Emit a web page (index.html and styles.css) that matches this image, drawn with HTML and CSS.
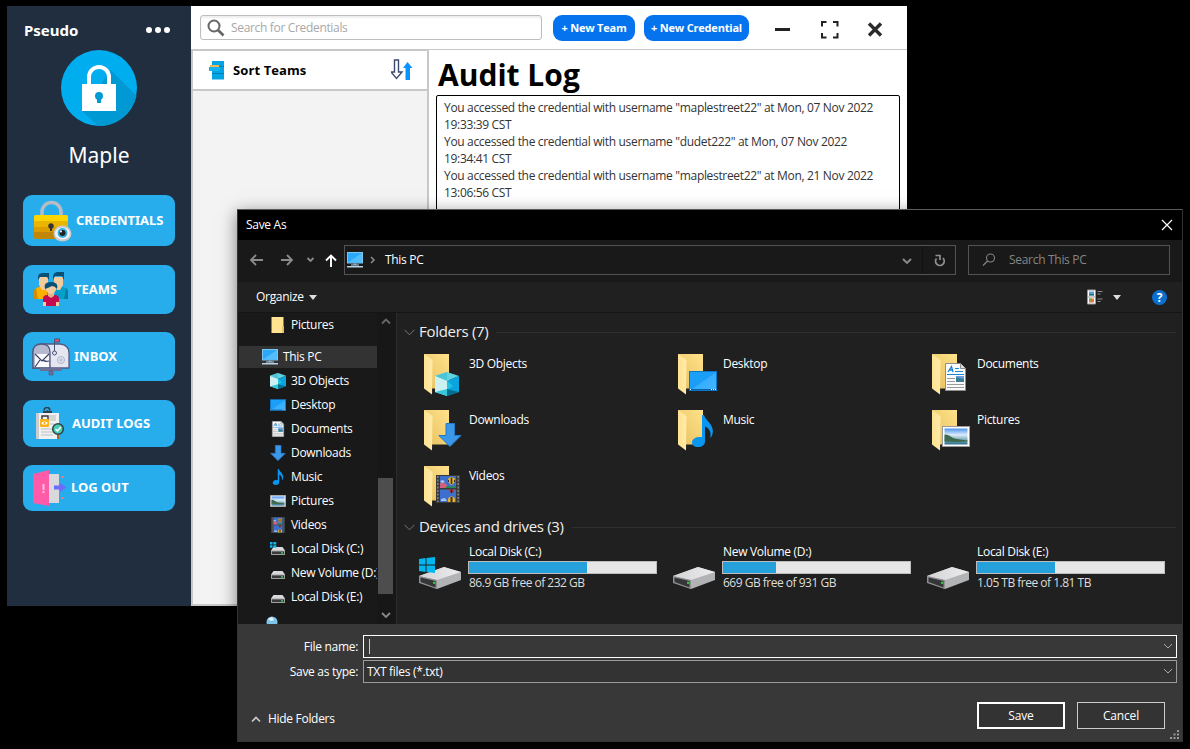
FILE: index.html
```html
<!DOCTYPE html>
<html lang="en">
<head>
<meta charset="utf-8">
<title>Pseudo</title>
<link rel="stylesheet" href="styles.css">
</head>
<body>
<svg class="defs" width="0" height="0">
  <defs>
    <linearGradient id="gBack" x1="0" x2="1" y1="1" y2="0"><stop offset="0" stop-color="#e7bf5e"/><stop offset="1" stop-color="#ffe28a"/></linearGradient>
    <linearGradient id="gFlap" x1="0" x2="1"><stop offset="0" stop-color="#ffe291"/><stop offset="1" stop-color="#ffeaa9"/></linearGradient>
    <linearGradient id="gScreen" x1="0" x2="1" y1="0" y2="1"><stop offset="0" stop-color="#1ba0f8"/><stop offset=".5" stop-color="#1b9df8"/><stop offset=".52" stop-color="#36adff"/><stop offset="1" stop-color="#45b6ff"/></linearGradient>
    <linearGradient id="gSky" x1="0" x2="0" y1="0" y2="1"><stop offset="0" stop-color="#4d92ee"/><stop offset=".4" stop-color="#dcecfb"/><stop offset=".6" stop-color="#9dc0cc"/><stop offset="1" stop-color="#2a6f8c"/></linearGradient>
    <linearGradient id="gDrive" x1="0" x2="1"><stop offset="0" stop-color="#d4d4d6"/><stop offset="1" stop-color="#ececee"/></linearGradient>
    <symbol id="folder" viewBox="0 0 48 48"><path d="M9 4h25v34.500H16z" fill="url(#gBack)"/><path d="M9 4l8.500 6-.5 34.500-8-6z" fill="url(#gFlap)"/></symbol>
    <symbol id="cube" viewBox="0 0 24 24"><path d="M12 0l12 4-12 5L0 4z" fill="#5fd3e2"/><path d="M12 0v9L0 4z" fill="#4ac6d8"/><path d="M0 4l12 5v15L0 20z" fill="#cdf1f3"/><path d="M24 4L12 9v15l12-4z" fill="#0aa5de"/><path d="M12 9l6 5-6 4z" fill="#22c3df"/><path d="M12 17l12 3-12 4z" fill="#046f8f"/><path d="M12 17L0 20l12 4z" fill="#35c7da"/></symbol>
    <symbol id="arrow" viewBox="0 0 24 24"><path d="M8 .5h8.500v12H23L12 23.500 .8 12.500H8z" fill="#3b97e8" stroke="#2478c8"/></symbol>
    <symbol id="desk" viewBox="0 0 28 20"><rect x=".5" y=".5" width="27" height="19" fill="url(#gScreen)" stroke="#0c76c9"/><path d="M1 18.500h26" stroke="#0861ab"/><path d="M1 18.500h1m20 0h1m1 0h1m1 0h1" stroke="#fff"/></symbol>
    <symbol id="doc" viewBox="0 0 21 28"><path d="M.5.500h15l5 5v22H.5z" fill="#fafafa" stroke="#8d8d8d"/><path d="M15.500.500v5h5" fill="#ddd" stroke="#8d8d8d"/><path d="M3 9l3.500-5.500L8 9M4.500 7H8" fill="none" stroke="#1a7fd0" stroke-width="1.300"/><path d="M10 5.500h4M10 8.500h8M2 11.500h17" stroke="#1a87d8"/><path d="M2 15.500h8M2 18.500h8M2 21.500h17M2 24.500h17" stroke="#9a9a9a"/><path d="M11 13h8v6h-8z" fill="#377d95"/><path d="M11 13h8v3l-8-2z" fill="#6b9ce3"/></symbol>
    <symbol id="note" viewBox="0 0 21 32"><path d="M10 0h2c1 4 5 6 7.500 11 2.200 4.500 1.500 8-.5 11.500h-.8C19.500 17 17 13 13 11.500V26.500C13 30 10 32 6 32S0 30 0 27.500C0 24.500 3 22 7 22h3z" fill="#0a96f0"/></symbol>
    <symbol id="pic" viewBox="0 0 28 21"><rect x=".5" y=".5" width="27" height="20" fill="#fff" stroke="#9b9b9b"/><path d="M2.500 2.500h23v16h-23z" fill="url(#gSky)"/><path d="M2.500 8.500c4-.5 7 3 10 4s8 1 13 2v.8c-8 1.200-15 .7-23 .2z" fill="#3c6b4e"/></symbol>
    <symbol id="film" viewBox="0 0 24 28"><path d="M0 0h24v28H0z" fill="#3a3a3a"/><path d="M4 1h16v12H4zM4 14.500h16V27H4z" fill="#3d70ce"/><path d="M4 8l3-1 4 3v3H4z" fill="#d0607e"/><path d="M4 6l3-1 2 2-3 1z" fill="#a9c5ee"/><path d="M12 5.500a3.500 3.500 0 017 0c0 2-2 3.500-3.500 4.500C14 9 12 7.500 12 5.500zM12 25a3.500 3.500 0 017 0v2h-7z" fill="#e3b52d"/><path d="M14.700 2.500h1.600V9h-1.600zM14.500 22h2v5h-2zM12 5h1v2h-1zM18 5h1v2h-1z" fill="#472b25"/><path d="M12 14.500h7l-3.500 4z" fill="#c9352e"/><path d="M14.700 14.500h1.600V18h-1.600z" fill="#222"/><path d="M10 11.500h10V13H10z" fill="#258c3c"/><path d="M5 24l4-1 2 3H5z" fill="#a9c5ee"/><path d="M1.800 1v26M22.200 1v26" stroke="#8c8c8c" stroke-width="1.400" stroke-dasharray="2 1.500"/></symbol>
    <symbol id="drive" viewBox="0 0 42 22"><path d="M0 9L25 0l17 5v8L18 22 0 15z" fill="#b2b3b5"/><path d="M0 9L25 0l17 5-24 8z" fill="url(#gDrive)"/><path d="M0 9l18 4v9L0 16z" fill="#8f9092"/><path d="M1.500 10.500L16.500 14v6.500L1.500 15z" fill="#343638"/><path d="M14 14.800h2.200v2H14z" fill="#32d14a"/></symbol>
    <symbol id="sdrive" viewBox="0 0 16 16"><path d="M3.500 6h9L15 9.500v4H1v-4z" fill="#d9d9db"/><rect x="1" y="9.500" width="14" height="4.500" rx="1" fill="#9fa0a2"/><rect x="2" y="10.500" width="12" height="2.500" fill="#37393b"/><path d="M11 11.300h2v1.200h-2z" fill="#37e05a"/></symbol>
    <symbol id="pc" viewBox="0 0 16 16"><rect x=".5" y=".5" width="15" height="10.500" fill="#2ba8fa" stroke="#7cc6ee"/><path d="M1 10.500L15 1v9.500z" fill="#52bdff"/><path d="M6.500 11h3v2h-3z" fill="#6e8a9a"/><path d="M4 12.500h8v1H4zM0 14h16v1.500H0z" fill="#b5d3e4"/></symbol>
    <symbol id="win" viewBox="0 0 16 16"><path d="M0 2l6.500-1v6.500H0zM7.500 .9L16 0v7.500H7.500zM0 8.500h6.500V15L0 14zM7.500 8.500H16V16l-8.500-.9z" fill="#00b7f1"/></symbol>
  </defs>
</svg>
<div class="desktop">

<section class="app">
  <aside class="side">
    <div class="side-top"><b>Pseudo</b><span class="dots"><i></i><i></i><i></i></span></div>
    <svg class="avatar" width="76" height="76" viewBox="0 0 76 76"><circle cx="38" cy="38" r="38" fill="#00adef"/><path d="M50 20L75.500 46A38 38 0 0137 76L21 61z" fill="#0099d3"/><path d="M28 35V27a10 10 0 0120 0v8" fill="none" stroke="#fff" stroke-width="4"/><path d="M21 34h34v27H21z" fill="#fff"/><circle cx="38" cy="46" r="4" fill="#0099d3"/><path d="M36 47h4v6h-4z" fill="#0099d3"/></svg>
    <div class="user">Maple</div>
    <nav class="menu">
      <a class="btn b1"><svg width="40" height="42" viewBox="0 0 40 42"><path d="M9 16v-4a9 9 0 0119 0v4" fill="none" stroke="#b4bcc4" stroke-width="3.500"/><rect x="1" y="15" width="34" height="24" rx="2" fill="#e9b500"/><path d="M1 17q0-2 2-2h30q2 0 2 2v4H1z" fill="#fcd503"/><path d="M1 27h34v5H1z" fill="#db9d00"/><path d="M1 32h34v5q0 2-2 2H3q-2 0-2-2z" fill="#bf8608"/><circle cx="18" cy="26" r="2.700" fill="#333"/><path d="M17 26h2v5h-2z" fill="#333"/><ellipse cx="29.500" cy="33.500" rx="9" ry="8" fill="#c8c9cb"/><ellipse cx="29.500" cy="33.500" rx="7.500" ry="6" fill="#f6f6f6"/><circle cx="29.500" cy="33" r="5" fill="#35b1e3"/><circle cx="29.500" cy="33" r="3" fill="#222"/><circle cx="28" cy="31.500" r="1" fill="#fff"/></svg><span>CREDENTIALS</span></a>
      <a class="btn b2"><svg width="36" height="36" viewBox="0 0 36 36"><path d="M1 27v-6q0-5 5-6h8v12z" fill="#fbb000"/><path d="M1 27v-6q0-4 2-5l2 11z" fill="#d08d00"/><path d="M35 27v-6q0-5-5-6h-8v12z" fill="#04a0c9"/><path d="M35 27v-6q0-4-2-5l-2 11z" fill="#067da5"/><path d="M6 5h9v8l-3 5h-3l-3-5zM21 5h9v8l-3 5h-3l-3-5z" fill="#f3cb9d"/><path d="M5 8V5q0-4 5-4h6v7l-2-3H7zM20 8V4q1-4 5-4h6v8l-2-4h-7z" fill="#085075"/><path d="M10 34v-7q0-4 4-4h8q4 0 4 4v7z" fill="#c60a50"/><path d="M10 34v-4h3v4zM23 34v-4h3v4z" fill="#f3cb9d"/><path d="M15 20h6v4l-3 2-3-2z" fill="#e4b382"/><path d="M13 13h10v5q-2 4-5 4t-5-4z" fill="#f3cb9d"/><path d="M12 17q-2-7 6-7t6 7q-2-3-5-3-4 2-7 3z" fill="#085075"/></svg><span>TEAMS</span></a>
      <a class="btn b3"><svg width="38" height="38" viewBox="0 0 38 38"><path d="M9 6h19q9 1 9 9v15H1V14q0-7 8-8z" fill="#e4e7f2" stroke="#535b82" stroke-width="1.300"/><path d="M1 14q0-8 8.500-8T18 14v16H1z" fill="#b4b9d0" stroke="#535b82" stroke-width="1.300"/><path d="M3 16h14v13H3z" fill="#fafafe"/><path d="M3 16l7 7 7-7M3 29l5-7m9 1q-4 1-6-1" fill="none" stroke="#39406a" stroke-width="1.200"/><path d="M22.500 14V1h5v3h-5" fill="#e8536a" stroke="#4b5278"/><circle cx="22.500" cy="15" r="2" fill="#e4e7f2" stroke="#4b5278"/><circle cx="29" cy="22" r="3.500" fill="none" stroke="#aeb3c9"/><circle cx="29" cy="22" r="1.200" fill="none" stroke="#aeb3c9"/><path d="M8 30h22v3H8z" fill="#6b7196"/><path d="M17 33h4v4h-4z" fill="#6b7196" stroke="#4b5278" stroke-width=".6"/></svg><span>INBOX</span></a>
      <a class="btn b4"><svg width="28" height="33" viewBox="0 0 28 33"><path d="M0 6h23v26H0z" fill="#f1f1f1"/><path d="M0 6h3v26H0z" fill="#c9cdd0"/><path d="M7 6V4h3a2 2 0 013 0h3v2z" fill="#333f48"/><path d="M8 3.500a3 3 0 016 0" fill="none" stroke="#333f48" stroke-width="1.500"/><path d="M13 8h7v6h-7z" fill="#d5d5d5"/><path d="M5 22h12M5 25h14M5 28h12M14 17h4" stroke="#b8bfc3"/><path d="M6 14v-5h6v5" fill="none" stroke="#333" stroke-width="1.400"/><rect x="4" y="12" width="9" height="8" rx="1" fill="#f9b319"/><ellipse cx="8.500" cy="16" rx="3" ry="1.600" fill="#fff"/><circle cx="8.500" cy="16" r="1" fill="#f39c12"/><path d="M22 27v5" stroke="#a96a1b" stroke-width="2"/><circle cx="22" cy="22" r="5.300" fill="#47cdb0" stroke="#32414b" stroke-width="1.500"/><path d="M19.500 22l2 2 3.300-4" fill="none" stroke="#fff" stroke-width="1.500"/></svg><span>AUDIT LOGS</span></a>
      <a class="btn b5"><svg width="34" height="36" viewBox="0 0 34 36"><path d="M14 4h12v29H14z" fill="#d9d9dc"/><path d="M0 4l16-4v36L0 33z" fill="#ff5ba8"/><path d="M9.500 14h2v6h-2zM9.500 21h2v2h-2z" fill="#ffc4e0"/><path d="M21 15.500h6V13l6.500 4.500L27 22v-2.500h-6z" fill="#6c6cfb"/><path d="M28.500 6h2v2h-2zM28.500 27h2v2h-2z" fill="#ef7f84"/></svg><span>LOG OUT</span></a>
    </nav>
  </aside>
  <div class="app-main">
    <header class="bar">
      <div class="search"><svg width="18" height="18" viewBox="0 0 18 18"><circle cx="7" cy="7" r="5.500" fill="none" stroke="#666" stroke-width="2"/><path d="M11 11l5.500 5.500" stroke="#666" stroke-width="2.600"/></svg><span>Search for Credentials</span></div>
      <button class="pill p1">+ New Team</button><button class="pill p2">+ New Credential</button>
      <svg class="winctl" width="110" height="20" viewBox="0 0 110 20"><path d="M0 10.500h15" stroke="#222" stroke-width="3"/><path d="M47 7.500V3h4.500M58 3h4.500v4.500M62.500 14v4.500H58M51.500 18.500H47V14" fill="none" stroke="#222" stroke-width="2"/><path d="M94 4.500l12 12m0-12l-12 12" stroke="#2b2b2b" stroke-width="3.400"/></svg>
    </header>
    <div class="cols">
      <div class="teams">
        <div class="sort"><svg width="15" height="19" viewBox="0 0 15 19"><path d="M3 0h12v18.500H3z" fill="#03a4e4"/><path d="M3 5.500h12M3 12.500h12" stroke="#0480b8"/><path d="M1 4h9v3H1z" fill="#f1b857"/><path d="M0 6h11v4H0z" fill="#16b3ee"/></svg><b>Sort Teams</b>
        <svg class="updown" width="22" height="22" viewBox="0 0 22 22"><path d="M3.500 1h4v12H11l-5.500 6.500L0 13h3.500z" fill="#fff" stroke="#3d4a70" stroke-width="1.400"/><path d="M14.500 21V9H12l4.500-6L21.500 9H19v12z" fill="#0893ff"/></svg></div>
      </div>
      <div class="audit">
        <h1>Audit Log</h1>
        <div class="log">You accessed the credential with username "maplestreet22" at Mon, 07 Nov 2022<br>19:33:39 CST<br>You accessed the credential with username "dudet222" at Mon, 07 Nov 2022<br>19:34:41 CST<br>You accessed the credential with username "maplestreet22" at Mon, 21 Nov 2022<br>13:06:56 CST</div>
      </div>
    </div>
  </div>
</section>

<section class="dialog">
  <header class="title"><span>Save As</span><svg width="12" height="12" viewBox="0 0 12 12"><path d="M1 1l10 10M11 1L1 11" stroke="#fff" stroke-width="1.200"/></svg></header>
  <div class="nav">
    <svg class="arrows" width="90" height="16" viewBox="0 0 90 16"><g fill="none" stroke="#8b8b8b" stroke-width="1.800"><path d="M14 8H2.500M7 3L2 8l5 5M32 8h11M38 3l5 5-5 5"/><path d="M58.500 6l3 3 3-3"/><path d="M82 15V4M77 8.500l5-5 5 5" stroke="#fff" stroke-width="1.900"/></g></svg>
    <div class="address"><svg width="16" height="16"><use href="#pc"/></svg><svg class="crumb" width="6" height="8" viewBox="0 0 6 8"><path d="M1 1l3 3-3 3" fill="none" stroke="#8b8b8b" stroke-width="1.500"/></svg><span>This PC</span>
      <svg class="adr-down" width="10" height="7" viewBox="0 0 10 7"><path d="M1 1l4 4 4-4" fill="none" stroke="#8b8b8b" stroke-width="1.900"/></svg>
      <i class="sep"></i><svg class="reload" width="12" height="13" viewBox="0 0 12 13"><path d="M9 4.200A4.300 4.300 0 112.500 4.500" fill="none" stroke="#8f8f8f" stroke-width="1.800"/><path d="M1.500 1.500h4.500v4.500" fill="none" stroke="#8f8f8f" stroke-width="1.700"/></svg></div>
    <div class="find"><svg width="14" height="14" viewBox="0 0 14 14"><circle cx="8.500" cy="5" r="4" fill="none" stroke="#858585" stroke-width="1.100"/><path d="M5.500 8L1 12.500" stroke="#858585" stroke-width="1.200"/></svg><span>Search This PC</span></div>
  </div>
  <div class="tools"><span>Organize</span><i class="tri"></i>
    <svg class="view" width="16" height="16" viewBox="0 0 16 16"><path d="M.5 1h8v14h-8z" fill="#fff" stroke="#999"/><path d="M2 2.500h5v4H2z" fill="#579fd9"/><path d="M2 5h5v1.500H2z" fill="#276c70"/><path d="M2 9.500h5v4H2z" fill="#db7b45"/><path d="M2 9.500h3v2H2z" fill="#66aa55"/><path d="M1 8h7" stroke="#999"/><path d="M10.500 2.500h5M10.500 5h3M10.500 10h5M10.500 12.500h3" stroke="#8b8b8b"/></svg><i class="tri"></i>
    <b class="help">?</b></div>
  <div class="body">
    <div class="tree">
      <div class="row first"><svg width="16" height="16" viewBox="0 0 16 16"><path d="M1.500 0h12v16h-12z" fill="#ffe391"/><path d="M12 9h2v7h-2z" fill="#e9c060"/></svg><span>Pictures</span></div>
      <div class="row sel"><svg width="16" height="16"><use href="#pc"/></svg><span>This PC</span></div>
      <div class="row"><svg width="16" height="16"><use href="#cube"/></svg><span>3D Objects</span></div>
      <div class="row"><svg width="16" height="16"><use href="#desk"/></svg><span>Desktop</span></div>
      <div class="row"><svg width="16" height="16"><use href="#doc"/></svg><span>Documents</span></div>
      <div class="row"><svg width="16" height="16"><use href="#arrow"/></svg><span>Downloads</span></div>
      <div class="row"><svg width="16" height="16"><use href="#note"/></svg><span>Music</span></div>
      <div class="row"><svg width="16" height="16"><use href="#pic"/></svg><span>Pictures</span></div>
      <div class="row"><svg width="16" height="16"><use href="#film"/></svg><span>Videos</span></div>
      <div class="row"><svg width="16" height="16" viewBox="0 0 16 16"><use href="#sdrive"/><path d="M0 1h2.500v2.500H0zM3.300 1h3v2.500h-3zM0 4.300h2.500v2.500H0zM3.300 4.300h3v2.500h-3z" fill="#10b5ef"/></svg><span>Local Disk (C:)</span></div>
      <div class="row"><svg width="16" height="16"><use href="#sdrive"/></svg><span>New Volume (D:)</span></div>
      <div class="row"><svg width="16" height="16"><use href="#sdrive"/></svg><span>Local Disk (E:)</span></div>
      <div class="row net"><svg width="16" height="16" viewBox="0 0 16 16"><circle cx="10" cy="6" r="5.500" fill="#7fc4ea"/><path d="M6 3l4-2 2 3-3 1z" fill="#e6f4fb"/></svg></div>
    </div>
    <div class="scroll"><svg width="10" height="7" viewBox="0 0 10 7"><path d="M1 5.500l4-4 4 4" fill="none" stroke="#686868" stroke-width="1.800"/></svg><i class="thumb"></i><svg width="10" height="7" viewBox="0 0 10 7"><path d="M1 1l4 4 4-4" fill="none" stroke="#888" stroke-width="1.800"/></svg></div>
    <div class="files">
      <div class="group"><svg width="11" height="7" viewBox="0 0 11 7"><path d="M.5.800l5 5 5-5" fill="none" stroke="#777"/></svg><span>Folders (7)</span><i></i></div>
      <div class="grid">
        <div class="tile"><svg width="48" height="48"><use href="#folder"/><use href="#cube" x="20" y="22" width="24" height="24"/></svg><span>3D Objects</span></div>
        <div class="tile"><svg width="48" height="48"><use href="#folder"/><use href="#desk" x="20" y="21" width="28" height="20"/></svg><span>Desktop</span></div>
        <div class="tile"><svg width="48" height="48"><use href="#folder"/><use href="#doc" x="22" y="13" width="21" height="28"/></svg><span>Documents</span></div>
        <div class="tile"><svg width="48" height="48"><use href="#folder"/><use href="#arrow" x="23" y="17" width="24" height="24"/></svg><span>Downloads</span></div>
        <div class="tile"><svg width="48" height="48"><use href="#folder"/><use href="#note" x="23" y="9" width="21" height="32"/></svg><span>Music</span></div>
        <div class="tile"><svg width="48" height="48"><use href="#folder"/><use href="#pic" x="19" y="20" width="28" height="21"/></svg><span>Pictures</span></div>
        <div class="tile"><svg width="48" height="48"><use href="#folder"/><use href="#film" x="21" y="13" width="24" height="28"/></svg><span>Videos</span></div>
      </div>
      <div class="group g2"><svg width="11" height="7" viewBox="0 0 11 7"><path d="M.5.800l5 5 5-5" fill="none" stroke="#777"/></svg><span>Devices and drives (3)</span><i></i></div>
      <div class="grid drives">
        <div class="tile"><svg width="48" height="48"><use href="#drive" x="4" y="22" width="42" height="22"/><use href="#win" x="4" y="12" width="16" height="16"/></svg><div><span>Local Disk (C:)</span><i class="meter"><i style="width:63.2%"></i></i><em>86.9 GB free of 232 GB</em></div></div>
        <div class="tile"><svg width="48" height="48"><use href="#drive" x="4" y="22" width="42" height="22"/></svg><div><span>New Volume (D:)</span><i class="meter"><i style="width:28.1%"></i></i><em>669 GB free of 931 GB</em></div></div>
        <div class="tile"><svg width="48" height="48"><use href="#drive" x="4" y="22" width="42" height="22"/></svg><div><span>Local Disk (E:)</span><i class="meter"><i style="width:41.8%"></i></i><em>1.05 TB free of 1.81 TB</em></div></div>
      </div>
    </div>
  </div>
  <footer class="foot">
    <div class="field name"><label>File name:</label><div class="box"><i class="caret"></i><svg width="10" height="7" viewBox="0 0 10 7"><path d="M1 1l4 4 4-4" fill="none" stroke="#aaa"/></svg></div></div>
    <div class="field"><label>Save as type:</label><div class="box"><span>TXT files (*.txt)</span><svg width="10" height="7" viewBox="0 0 10 7"><path d="M1 1l4 4 4-4" fill="none" stroke="#aaa"/></svg></div></div>
    <div class="actions"><svg width="10" height="7" viewBox="0 0 10 7"><path d="M1 5.500l4-4 4 4" fill="none" stroke="#ccc" stroke-width="1.700"/></svg><span>Hide Folders</span><button class="save">Save</button><button>Cancel</button></div>
    <svg class="grip" width="9" height="9" viewBox="0 0 9 9"><path d="M7 0h2v2H7zM3.500 3.500h2v2h-2zM7 3.500h2v2H7zM0 7h2v2H0zM3.500 7h2v2h-2zM7 7h2v2H7z" fill="#999"/></svg>
  </footer>
</section>
</div>
</body>
</html>
```
FILE: styles.css
```css
* { box-sizing: border-box; }
body { margin: 0; background: #000; }
.defs { position: absolute; }
svg { flex: none; display: block; }
button { font: inherit; }
.desktop { position: relative; width: 1190px; height: 749px; background: #000; overflow: hidden; font-family: "Open Sans", "Noto Sans", sans-serif; font-size: 12px; }

/* Password manager window */
.app { position: absolute; left: 7px; top: 6px; width: 900px; height: 600px; display: flex; background: #fff; }
.side { flex: none; width: 184px; background: #202e3f; color: #fff; display: flex; flex-direction: column; align-items: center; font-family: "Noto Sans", sans-serif; }
.side-top { width: 100%; height: 44px; padding: 4px 21px 0 17px; display: flex; align-items: center; justify-content: space-between; font-size: 15px; }
.dots { display: flex; gap: 3px; }
.dots i { width: 6px; height: 6px; border-radius: 50%; background: #fff; }
.user { margin-top: 13px; height: 32px; line-height: 32px; font-size: 21px; }
.menu { margin-top: 24px; width: 152px; display: flex; flex-direction: column; font-weight: 700; font-size: 13px; }
.btn { display: flex; align-items: center; border-radius: 9px; background: #27adec; }
.btn span { padding-bottom: 2px; }
.b1 { height: 51px; padding-left: 10px; gap: 3px; margin-bottom: 19px; }
.b2 { height: 49px; padding-left: 10px; gap: 5px; margin-bottom: 18px; }
.b3 { height: 49px; padding-left: 9px; gap: 4px; margin-bottom: 19px; }
.b4 { height: 47px; padding-left: 13px; gap: 8px; margin-bottom: 18px; }
.b5 { height: 46px; padding-left: 10px; gap: 4px; }
.app-main { flex: 1; min-width: 0; display: flex; flex-direction: column; }
.bar { height: 44px; border-bottom: 1px solid #c8c8c8; display: flex; align-items: flex-start; padding: 9px 0 0 9px; }
.search { width: 342px; height: 25px; border: 1px solid #bdbdbd; border-radius: 3px; box-shadow: inset 0 2px 2px #eee; display: flex; align-items: center; padding-left: 6px; gap: 6px; color: #a8a8a8; font-size: 12px; letter-spacing: -.33px; }
.pill { height: 26px; border: 0; border-radius: 9px; background: #0573ee; color: #fff; font-weight: 700; font-size: 11px; padding: 0 0 2px; white-space: nowrap; letter-spacing: -.2px; }
.p1 { width: 82px; margin-left: 11px; }
.p2 { width: 105px; margin-left: 9px; }
.winctl { margin: 4px 0 0 26px; }
.cols { flex: 1; min-height: 0; display: flex; }
.teams { flex: none; width: 238px; background: #f3f3f3; border: 2px solid #c8c8c8; border-top-width: 1px; }
.sort { height: 40px; background: #fff; border-bottom: 2px solid #c8c8c8; display: flex; align-items: center; padding: 0 14px 0 16px; gap: 9px; font-size: 13px; letter-spacing: .1px; }
.updown { margin-left: auto; }
.audit { flex: 1; min-width: 0; padding: 6px 7px 0 7px; }
.audit h1 { margin: 0 0 0 2px; height: 39px; line-height: 38px; font-size: 30px; font-weight: 700; }
.log { height: 505px; border: 1px solid #000; border-radius: 2px; padding: 3px 7px; line-height: 17px; color: #333; white-space: nowrap; font-size: 12px; letter-spacing: -.33px; }

/* File dialog window */
.dialog { position: absolute; left: 237px; top: 209px; width: 946px; height: 533px; border: 1px solid #333; border-top-color: #5c5c5c; background: #202020; color: #fff; display: flex; flex-direction: column; box-shadow: 0 4px 16px rgba(0,0,0,.5); letter-spacing: -.3px; }
.title { height: 30px; background: #000; display: flex; align-items: center; justify-content: space-between; padding: 0 9px 0 8px; }
.title span, .address span, .find span, .tools span, .row span { padding-bottom: 2px; }
.nav { height: 42px; background: #191919; display: flex; align-items: center; padding: 0 12px 2px 11px; }
.arrows { margin-right: 5px; }
.address { width: 612px; height: 30px; border: 1px solid #535353; display: flex; align-items: center; padding-left: 2px; }
.crumb { margin: 0 9px 0 7px; }
.adr-down { margin-left: auto; margin-top: 3px; }
.sep { width: 1px; height: 28px; background: #111; margin: 0 11px 0 10px; }
.reload { margin-right: 9px; }
.find { margin-left: 12px; width: 202px; height: 30px; border: 1px solid #535353; display: flex; align-items: center; padding-left: 13px; gap: 13px; color: #858585; }
.tools { height: 31px; border-bottom: 1px solid #151515; display: flex; align-items: center; padding: 0 15px 0 18px; }
.tri { margin-left: 5px; border: 4px solid transparent; border-top: 5px solid #ddd; border-bottom: 0; }
.view { margin-left: auto; margin-right: 5px; }
.help { margin-left: 31px; width: 15px; height: 15px; border-radius: 50%; background: #0a6fd0; font-size: 12px; line-height: 15px; text-align: center; }
.body { height: 311px; display: flex; }
.tree { flex: none; width: 139px; background: #191919; overflow: hidden; }
.row { height: 24px; display: flex; align-items: center; padding-left: 32px; gap: 5px; white-space: nowrap; }
.first { margin-bottom: 9px; }
.sel { height: 22px; margin: 0 0 1px 1px; padding-left: 23px; background: #333; }
.net { padding: 5px 0 0 24px; }
.scroll { flex: none; width: 20px; padding: 5px 3px 5px 1px; background: #171717; border-right: 1px solid #2b2b2b; display: flex; flex-direction: column; align-items: center; }
.thumb { margin: auto 0 18px; width: 15px; height: 116px; background: #4d4d4d; }
.files { flex: 1; min-width: 0; padding: 7px 6px 0 7px; }
.group { height: 24px; display: flex; align-items: center; gap: 4px; font-size: 15px; letter-spacing: -.3px; color: #eee; white-space: nowrap; }
.group span { padding-bottom: 2px; }
.group i { flex: 1; height: 1px; background: #303030; margin-left: 4px; }
.grid { display: grid; grid-template-columns: repeat(3, 254px); grid-auto-rows: 56px; padding: 6px 0 0 11px; }
.tile { display: flex; gap: 6px; }
.tile > span { margin-top: 5px; line-height: 18px; }
.g2 { margin-top: -3px; }
.drives { padding-top: 5px; }
.drives svg { margin-top: 1px; }
.drives .tile div { width: 190px; margin-left: -1px; }
.drives span, .drives em { display: block; height: 17px; line-height: 16px; padding-left: 1px; font-style: normal; white-space: nowrap; }
.drives em { color: #ddd; letter-spacing: -.5px; line-height: 17px; }
.meter { display: block; width: 189px; height: 13px; border: 1px solid #bcbcbc; background: #e6e6e6; }
.meter i { display: block; height: 100%; background: #26a0da; }
.foot { flex: 1; position: relative; background: #383838; padding: 10px 5px 0 0; }
.field { display: flex; align-items: center; height: 24px; margin-bottom: 1px; }
.field label { width: 120px; text-align: right; margin-right: 5px; }
.box { flex: 1; height: 23px; border: 1px solid #9b9b9b; background: #333; display: flex; align-items: center; padding: 0 3px; }
.name .box { border-color: #fff; background: #383838; }
.box svg { margin-left: auto; }
.caret { width: 1px; height: 15px; background: #ccc; margin-left: 2px; }
.actions { margin-top: 19px; display: flex; align-items: center; padding: 0 12px 0 13px; }
.actions span { margin: 6px auto 0 7px; }
.actions svg { margin-top: 7px; }
.actions button { width: 88px; height: 27px; margin-left: 12px; border: 1px solid #ccc; background: #333; color: #fff; letter-spacing: -.15px; padding: 0; }
.actions .save { border: 2px solid #fff; }
.grip { position: absolute; right: 3px; bottom: 2px; }
```
